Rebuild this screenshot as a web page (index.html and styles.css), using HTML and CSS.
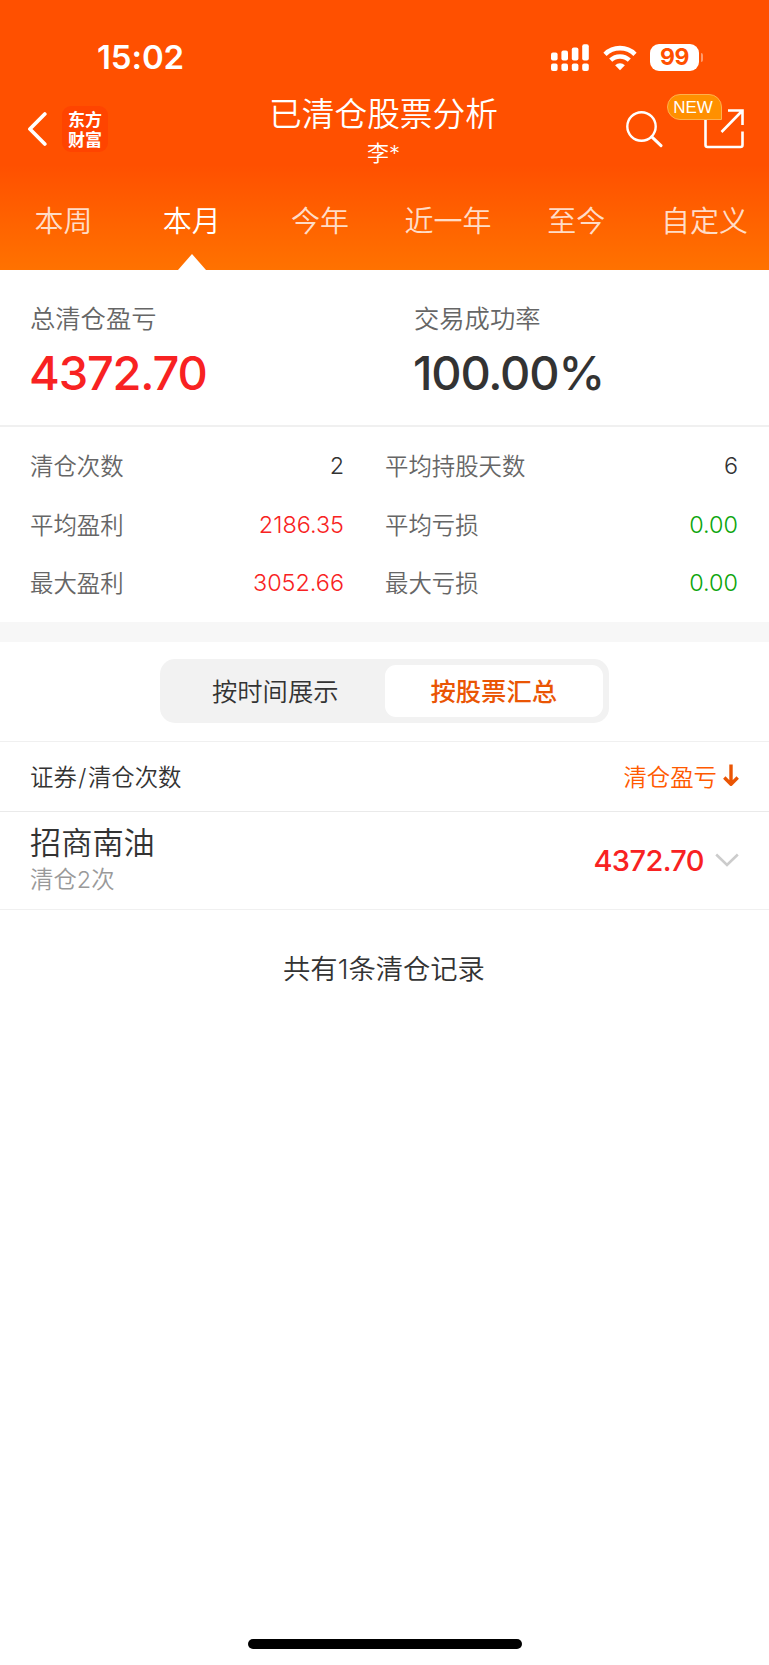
FILE: index.html
```html
<!DOCTYPE html>
<html lang="zh-CN">
<head>
  <meta charset="UTF-8">
  <meta name="viewport" content="width=device-width, initial-scale=1.0">
  <title>已清仓股票分析</title>
  <link rel="stylesheet" href="styles.css">
</head>
<body>
  <header class="topo">
    <div class="status-bar">
      <span class="hora">15:02</span>
      <div class="status-icons">
        <svg class="sinal" width="38" height="28" viewBox="0 0 38 28" fill="#fff">
          <rect x="0" y="8.5" width="6.6" height="8" rx="2"/>
          <rect x="10.4" y="6.5" width="6.6" height="10" rx="2"/>
          <rect x="20.8" y="3.5" width="6.6" height="13" rx="2"/>
          <rect x="31.2" y="0.3" width="6.6" height="16.2" rx="2"/>
          <rect x="0" y="19.6" width="6.6" height="7.4" rx="2"/>
          <rect x="10.4" y="19.6" width="6.6" height="7.4" rx="2"/>
          <rect x="20.8" y="19.6" width="6.6" height="7.4" rx="2"/>
          <rect x="31.2" y="19.6" width="6.6" height="7.4" rx="2"/>
        </svg>
        <svg class="wifi" width="34" height="26" viewBox="0 0 34 26" fill="none" stroke="#fff">
          <path d="M2 9.3a21.4 21.4 0 0 1 30 0" stroke-width="4.6"/>
          <path d="M7.7 15.2a13.4 13.4 0 0 1 18.6 0" stroke-width="4.4"/>
          <path d="M17 25.2l-4.9-4.9a7 7 0 0 1 9.8 0z" fill="#fff" stroke="none"/>
        </svg>
        <div class="bateria">99</div>
        <span class="bateria-ponta"></span>
      </div>
    </div>

    <div class="nav-bar">
      <div class="nav-esquerda">
        <svg width="20" height="36" viewBox="0 0 20 36" fill="none" stroke="#fff" stroke-width="3.7" stroke-linecap="round" stroke-linejoin="round">
          <path d="M17.8 3L2.9 18l14.9 15"/>
        </svg>
        <div class="logo">东方<br>财富</div>
      </div>
      <div class="titulo">
        <h1>已清仓股票分析</h1>
        <p>李*</p>
      </div>
      <div class="nav-direita">
        <svg width="38" height="38" viewBox="0 0 38 38" fill="none" stroke="#fff" stroke-width="2.4" stroke-linecap="round">
          <circle cx="16.5" cy="16.5" r="14.2"/>
          <path d="M26.8 26.8l9.2 8.8" stroke-width="3"/>
        </svg>
        <div class="compartilhar">
          <svg width="40" height="40" viewBox="0 0 40 40" fill="none" stroke="#fff" stroke-width="2.6">
            <path d="M1.5 9v27q0 2 2 2h33q2 0 2-2V22.5M24 1.5h14.5V16M38 2L17.5 23"/>
          </svg>
          <span class="novo">NEW</span>
        </div>
      </div>
    </div>

    <nav class="abas">
      <a>本周</a>
      <a class="ativa">本月</a>
      <a>今年</a>
      <a>近一年</a>
      <a>至今</a>
      <a>自定义</a>
    </nav>
  </header>

  <main>
    <section class="resumo">
      <div>
        <h2>总清仓盈亏</h2>
        <p class="vermelho">4372.70</p>
      </div>
      <div class="taxa">
        <h2>交易成功率</h2>
        <p>100.00%</p>
      </div>
    </section>

    <section class="dados">
      <div class="dado"><span>清仓次数</span><b>2</b></div>
      <div class="dado"><span>平均持股天数</span><b>6</b></div>
      <div class="dado"><span>平均盈利</span><b class="vermelho">2186.35</b></div>
      <div class="dado"><span>平均亏损</span><b class="verde">0.00</b></div>
      <div class="dado"><span>最大盈利</span><b class="vermelho">3052.66</b></div>
      <div class="dado"><span>最大亏损</span><b class="verde">0.00</b></div>
    </section>

    <section class="modo">
      <div class="seletor">
        <button>按时间展示</button>
        <button class="selecionado">按股票汇总</button>
      </div>
    </section>

    <section class="lista">
      <div class="lista-topo">
        <span>证券<span class="barra">/</span>清仓次数</span>
        <span class="ordem">清仓盈亏
          <svg width="16" height="23" viewBox="0 0 16 23" fill="none" stroke="#ea5504" stroke-width="3.4">
            <path d="M8 0.5v20M1.3 13.5L8 20.2l6.7-6.7" stroke-linejoin="round"/>
          </svg>
        </span>
      </div>
      <div class="item">
        <div>
          <h3>招商南油</h3>
          <p>清仓2次</p>
        </div>
        <div class="item-valor">
          <strong>4372.70</strong>
          <svg width="24" height="15" viewBox="0 0 24 15" fill="none" stroke="#ccc" stroke-width="2.6">
            <path d="M1.2 1.5L12 12l10.8-10.5"/>
          </svg>
        </div>
      </div>
    </section>

    <p class="total">共有1条清仓记录</p>
  </main>

  <footer class="rodape"><div class="barra-inicio"></div></footer>
</body>
</html>
```
FILE: styles.css
```css
* {
  margin: 0;
  padding: 0;
  box-sizing: border-box;
}

body {
  font-family: Inter, "Noto Sans CJK SC", sans-serif;
  font-weight: 350;
  background-color: #fff;
  color: #333;
  width: 769px;
  height: 1665px;
  display: flex;
  flex-direction: column;
  overflow: hidden;
}

svg {
  display: block;
  flex-shrink: 0;
}

.vermelho {
  color: #f82222;
}

.verde {
  color: #0ba50b;
}

/* Topo */
.topo {
  height: 270px;
  background: linear-gradient(#ff5000 0, #ff5000 165px, #ff7200 270px);
  color: #fff;
}

.status-bar {
  height: 90px;
  padding: 24px 66px 0 97px;
  display: flex;
  justify-content: space-between;
}

.hora {
  font-size: 33px;
  font-weight: 600;
  line-height: 67px;
  letter-spacing: -0.1px;
}

.status-icons {
  height: 67px;
  display: flex;
  align-items: center;
}

.wifi {
  margin: 0 13px 0 14px;
}

.bateria {
  width: 49px;
  height: 27px;
  border-radius: 9px;
  background-color: #fff;
  color: #ff5000;
  font-size: 23px;
  font-weight: 700;
  line-height: 27px;
  letter-spacing: -0.5px;
  text-align: center;
}

.bateria-ponta {
  width: 2px;
  height: 9px;
  margin-left: 2px;
  border-radius: 0 2px 2px 0;
  background-color: #ff9a6b;
}

.nav-bar {
  height: 82px;
  padding: 0 25px 0 27px;
  display: grid;
  grid-template-columns: 1fr auto 1fr;
}

.nav-esquerda,
.nav-direita {
  height: 78px;
  display: flex;
  align-items: center;
}

.nav-esquerda {
  gap: 15px;
}

.logo {
  width: 46px;
  height: 46px;
  border-radius: 9px;
  background-color: #ff4400;
  padding-top: 3px;
  font-family: "Noto Sans CJK SC", sans-serif;
  font-size: 17px;
  font-weight: 700;
  line-height: 19.5px;
  text-align: center;
}

.titulo {
  padding-top: 1px;
  margin-left: -4px;
  text-align: center;
}

.titulo h1 {
  font-size: 32.7px;
  font-weight: 350;
  line-height: 46px;
}

.titulo p {
  font-size: 22px;
  line-height: 32px;
}

.nav-direita {
  justify-content: flex-end;
  gap: 41px;
}

.compartilhar {
  position: relative;
}

.novo {
  position: absolute;
  left: -37px;
  top: -15px;
  width: 55px;
  height: 26px;
  padding-right: 3px;
  border: 1px solid #ffb04d;
  border-radius: 13px 13px 0 13px;
  background-color: #ff9000;
  font-family: "Liberation Sans", sans-serif;
  font-size: 17px;
  font-weight: 400;
  line-height: 25px;
  text-align: center;
}

.abas {
  height: 98px;
  display: grid;
  grid-template-columns: repeat(6, 1fr);
}

.abas a {
  position: relative;
  height: 98px;
  padding-right: 1px;
  font-size: 29px;
  line-height: 100px;
  text-align: center;
  color: rgba(255, 255, 255, 0.8);
}

.abas .ativa {
  color: #fff;
}

.abas .ativa::after {
  content: "";
  position: absolute;
  left: 50%;
  bottom: 0;
  margin-left: -14px;
  border: 14px solid transparent;
  border-top: 0;
  border-bottom: 16px solid #fff;
}

/* Resumo */
.resumo {
  height: 157px;
  padding: 30px 30px 0;
  border-bottom: 2px solid #f0f0f0;
  display: grid;
  grid-template-columns: 384px 1fr;
}

.resumo h2 {
  font-size: 25.3px;
  font-weight: 350;
  line-height: 38px;
  color: #666;
}

.resumo p {
  margin-left: -1px;
  font-size: 47px;
  font-weight: 550;
  line-height: 70px;
  letter-spacing: -1.2px;
}

.dados {
  height: 195px;
  padding: 10px 31px 0 30px;
  display: grid;
  grid-template-columns: 314px 353px;
  grid-auto-rows: 58.6px;
  column-gap: 41px;
}

.dado {
  display: flex;
  justify-content: space-between;
  font-size: 23.4px;
  line-height: 59px;
}

.dado span {
  color: #666;
}

.dado b {
  font-weight: 350;
  line-height: 58px;
}

/* Seletor */
.modo {
  height: 120px;
  padding-bottom: 1px;
  border-top: 20px solid #f7f7f7;
  border-bottom: 1px solid #f0f0f0;
  display: flex;
  justify-content: center;
  align-items: center;
}

.seletor {
  width: 449px;
  height: 64px;
  padding: 6px;
  border-radius: 15px;
  background-color: #f2f2f2;
  display: flex;
}

.seletor button {
  flex: 1;
  padding-bottom: 2px;
  border: none;
  border-radius: 11px;
  background: none;
  font-family: inherit;
  font-size: 25.3px;
  font-weight: 350;
  color: #333;
}

.seletor .selecionado {
  background-color: #fff;
  color: #ea5504;
  font-weight: 500;
}

/* Lista */
.lista-topo,
.item {
  padding: 0 30px;
  display: flex;
  justify-content: space-between;
  align-items: center;
}

.lista-topo {
  height: 70px;
  padding-bottom: 2px;
  border-bottom: 1px solid #eaeaea;
  font-size: 23.4px;
}

.lista-topo .barra {
  margin: 0 1.5px;
}

.ordem {
  display: flex;
  align-items: center;
  gap: 6px;
  color: #ff5a00;
}

.item {
  height: 98px;
  border-bottom: 1px solid #f0f0f0;
}

.item h3 {
  font-size: 31.2px;
  font-weight: 350;
  line-height: 38px;
}

.item p {
  font-size: 23.4px;
  line-height: 36px;
  color: #999;
}

.item-valor {
  display: flex;
  align-items: center;
  gap: 11px;
}

.item strong {
  font-size: 29px;
  font-weight: 550;
  letter-spacing: -0.6px;
  color: #f82222;
}

.total {
  margin-top: 40px;
  padding-right: 1px;
  font-size: 27.3px;
  line-height: 40px;
  text-align: center;
}

.rodape {
  margin-top: auto;
  padding-bottom: 16px;
}

.barra-inicio {
  width: 274px;
  height: 10px;
  margin: 0 auto;
  border-radius: 5px;
  background-color: #000;
}
```
